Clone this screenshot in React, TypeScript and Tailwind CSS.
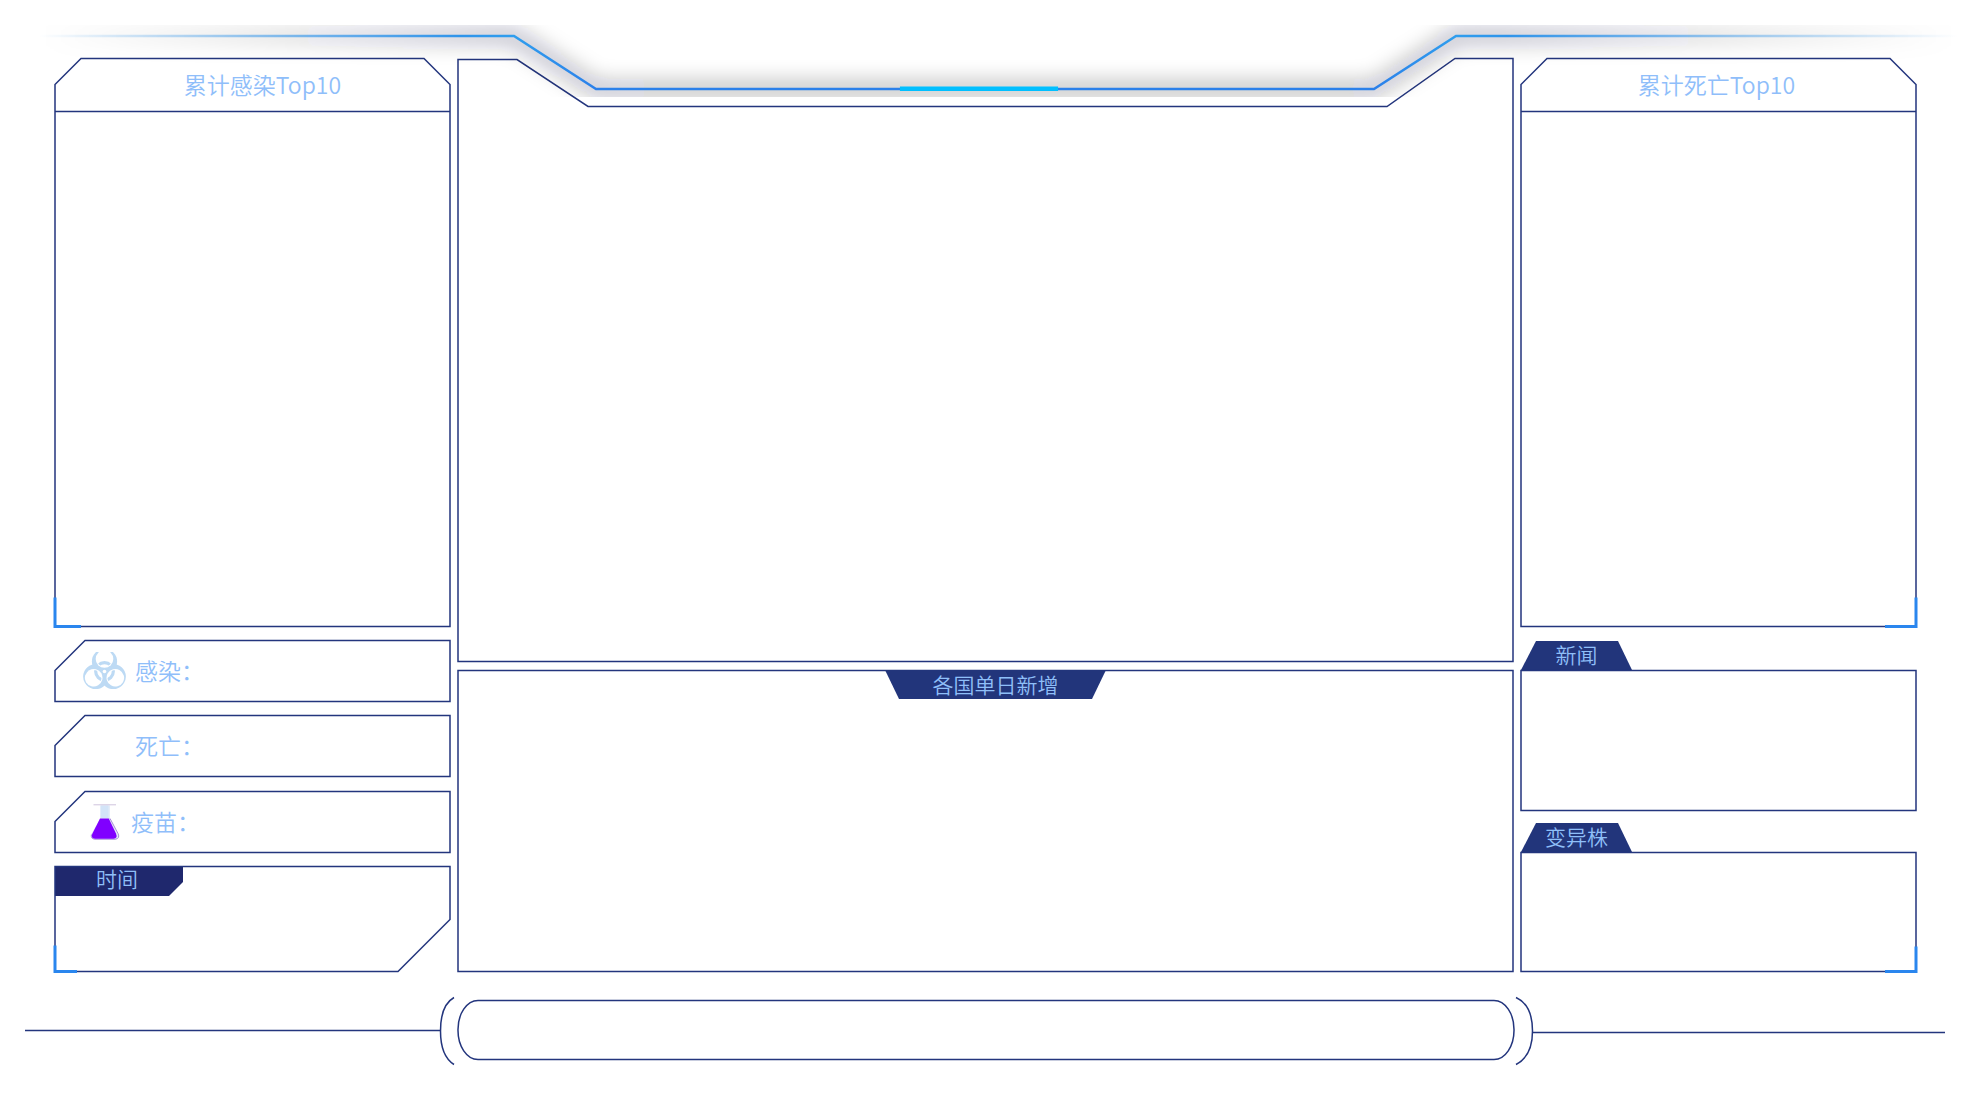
import { useLayoutEffect, useRef, useState } from "react";
import type { ReactNode, RefObject } from "react";

const NAVY = "#23357d";
const ACCENT = "#2a86ee";

function useSize<T extends Element>(): [RefObject<T | null>, number, number] {
  const ref = useRef<T>(null);
  const [size, setSize] = useState({ w: 0, h: 0 });
  useLayoutEffect(() => {
    const el = ref.current;
    if (!el) return;
    const read = () => {
      const r = el.getBoundingClientRect();
      setSize({ w: Math.round(r.width), h: Math.round(r.height) });
    };
    read();
    const observer = new ResizeObserver(read);
    observer.observe(el);
    return () => observer.disconnect();
  }, []);
  return [ref, size.w, size.h];
}

type Draw = (w: number, h: number) => string;

/* Outline that follows the size of the panel around it. */
function Outline({ draw, accent }: { draw: Draw; accent?: Draw }) {
  const [ref, w, h] = useSize<SVGSVGElement>();
  return (
    <svg ref={ref} aria-hidden="true" className="pointer-events-none absolute inset-0 size-full overflow-visible">
      <g transform="translate(0 0.5)" fill="none">
        <path d={draw(w, h)} stroke={NAVY} strokeWidth="1.5" />
        {accent && <path d={accent(w, h)} stroke={ACCENT} strokeWidth="3" />}
      </g>
    </svg>
  );
}

const box: Draw = (w, h) => `M0 0H${w}V${h}H0Z`;
const topPanel: Draw = (w, h) => `M0 26L26 0H${w - 26}L${w} 26V${h}H0ZM0 53H${w}`;
const statBox: Draw = (w, h) => `M0 30L30 0H${w}V${h}H0Z`;
const timeBox: Draw = (w, h) => `M0 0H${w}V${h - 52}L${w - 52} ${h}H0Z`;
const mapBox: Draw = (w, h) =>
  `M0 ${h}V1H59L130 48H${w - 126}L${w - 58} 0H${w}V${h}Z`;
const pill: Draw = (w, h) =>
  `M20 0H${w - 20}A20 29 0 0 1 ${w} ${h / 2}A20 29 0 0 1 ${w - 20} ${h}H20A20 29 0 0 1 0 ${h / 2}A20 29 0 0 1 20 0Z`;

function HeaderLine() {
  const [ref, w] = useSize<SVGSVGElement>();
  const a = Math.round(w * 0.2591);
  const b = Math.round(w * 0.3004);
  const c = Math.round(w * 0.6925);
  const d = Math.round(w * 0.7339);
  const end = w - 26;
  const line = `M39 11H${a}L${b} 64H${c}L${d} 11H${end}`;
  return (
    <header className="pointer-events-none absolute inset-x-0 top-[25px] z-10 h-[72px] overflow-hidden">
      <svg ref={ref} aria-hidden="true" className="size-full">
        <defs>
          <linearGradient id="beam" gradientUnits="userSpaceOnUse" x1="39" y1="0" x2={end} y2="0">
            <stop offset="0" stopColor="#3f9bea" stopOpacity="0" />
            <stop offset="0.12" stopColor="#3f9bea" stopOpacity="0.6" />
            <stop offset="0.22" stopColor="#2f94ea" />
            <stop offset="0.247" stopColor="#2f9eee" />
            <stop offset="0.29" stopColor="#2b80ea" />
            <stop offset="0.696" stopColor="#2b80ea" />
            <stop offset="0.738" stopColor="#2f9eee" />
            <stop offset="0.765" stopColor="#2f94ea" />
            <stop offset="0.87" stopColor="#3f9bea" stopOpacity="0.55" />
            <stop offset="1" stopColor="#3f9bea" stopOpacity="0" />
          </linearGradient>
          <linearGradient id="shade" gradientUnits="userSpaceOnUse" x1="39" y1="0" x2={end} y2="0">
            <stop offset="0" stopColor="#061030" stopOpacity="0" />
            <stop offset="0.1" stopColor="#061030" stopOpacity="0.22" />
            <stop offset="0.24" stopColor="#061030" stopOpacity="0.6" />
            <stop offset="0.5" stopColor="#000000" stopOpacity="0.6" />
            <stop offset="0.76" stopColor="#061030" stopOpacity="0.6" />
            <stop offset="0.9" stopColor="#061030" stopOpacity="0.22" />
            <stop offset="1" stopColor="#061030" stopOpacity="0" />
          </linearGradient>
          <filter id="glow" filterUnits="userSpaceOnUse" x="0" y="-60" width={w} height="200">
            <feGaussianBlur stdDeviation="11" />
          </filter>
        </defs>
        <path d={line} fill="none" stroke="url(#shade)" strokeWidth="7" filter="url(#glow)" />
        <path d={line} fill="none" stroke="url(#beam)" strokeWidth="2.5" />
        <rect x={w * 0.4536} y="61.5" width={w * 0.0797} height="4.5" fill="#00bfff" />
      </svg>
    </header>
  );
}

function Biohazard() {
  const angles = [0, 120, 240];
  return (
    <svg viewBox="0 0 43 37" aria-hidden="true" className="h-[37px] w-[43px]">
      <defs>
        <mask id="bio-lobes" maskUnits="userSpaceOnUse" x="0" y="0" width="43" height="37">
          <rect width="43" height="37" fill="#fff" />
          {angles.map((t) => (
            <circle key={t} cx="21.5" cy="7" r="8.8" fill="#000" transform={`rotate(${t} 21.5 19.5)`} />
          ))}
          <circle cx="21.5" cy="19.5" r="1.8" fill="#000" />
        </mask>
        <clipPath id="bio-ring">
          {angles.map((t) => (
            <circle key={t} cx="21.5" cy="7" r="7.8" transform={`rotate(${t} 21.5 19.5)`} />
          ))}
        </clipPath>
      </defs>
      <g fill="#bddaf4" mask="url(#bio-lobes)">
        {angles.map((t) => (
          <circle key={t} cx="21.5" cy="9.4" r="12.6" transform={`rotate(${t} 21.5 19.5)`} />
        ))}
      </g>
      <circle cx="21.5" cy="19.5" r="8.8" fill="none" stroke="#bddaf4" strokeWidth="3.2" clipPath="url(#bio-ring)" />
    </svg>
  );
}

function Flask() {
  return (
    <svg viewBox="0 0 30 36" aria-hidden="true" className="h-9 w-[30px]">
      <path d="M10.5 1.5H20V14L28 29.5Q30.5 35 25.5 35.5H4.5Q0 35 1 30.5L10.5 14Z" fill="#e4ecf8" />
      <path d="M10.5 1.5H18.5V14H10.5Z" fill="#d3e4f8" />
      <path d="M3.5 0.8H26" stroke="#cfc4dd" strokeWidth="1" />
      <path d="M20 14.5L28.2 29.8Q30 34.5 25.5 35.2H5Q0.6 34.8 1.4 30.5" fill="none" stroke="#a98fd6" strokeWidth="1" />
      <path d="M10 14.5H18.8L26 29.5Q28 34.5 23.5 34.8H5Q0.8 34.4 2.2 30Z" fill="#8000ff" />
    </svg>
  );
}

function TopPanel({ title, flip }: { title: string; flip?: boolean }) {
  return (
    <section className="relative h-[568px]">
      <Outline
        draw={topPanel}
        accent={
          flip
            ? (w, h) => `M${w} ${h - 29}V${h}H${w - 31}`
            : (_, h) => `M0 ${h - 29}V${h}H26`
        }
      />
      <h2
        className={
          flip
            ? "flex h-[53px] items-center justify-center pr-1 text-[23px]"
            : "flex h-[53px] items-center justify-center pl-5 text-[23px]"
        }
      >
        {title}
      </h2>
    </section>
  );
}

function Stat({ children }: { children: ReactNode }) {
  return (
    <section className="relative flex h-[61px] items-center pl-7 text-[23px]">
      <Outline draw={statBox} />
      {children}
    </section>
  );
}

function TabbedPanel({ title, className, accent }: { title: string; className: string; accent?: Draw }) {
  return (
    <section className={className}>
      <h2 className="flex h-[29px] w-[111px] items-center justify-center bg-[#22357b] pb-0.5 text-[21px] text-[#8fbff8] [clip-path:polygon(15px_0,calc(100%-14px)_0,100%_100%,0_100%)]">
        {title}
      </h2>
      <div className="relative flex-1">
        <Outline draw={box} accent={accent} />
      </div>
    </section>
  );
}

export default function App() {
  return (
    <div className="relative min-h-screen w-full overflow-hidden bg-white pt-[58px] pb-12 font-['Noto_Sans_CJK_SC',sans-serif] font-[350] text-[#8fbefa]">
      <HeaderLine />
      <main className="grid min-h-[913px] grid-cols-[395fr_1055fr_395fr] gap-2 pr-[68px] pl-[55px]">
        <div className="flex flex-col gap-[14px]">
          <TopPanel title="累计感染Top10" />
          <Stat>
            <Biohazard />
            <span className="pl-[9px]">感染：</span>
          </Stat>
          <Stat>
            <span className="pl-[52px]">死亡：</span>
          </Stat>
          <div className="pt-px">
            <Stat>
              <div className="pl-[7px]">
                <Flask />
              </div>
              <span className="pl-[11px]">疫苗：</span>
            </Stat>
          </div>
          <section className="relative flex-1">
            <h2 className="flex h-[30px] w-32 items-center justify-center bg-[#1f286d] pr-1 pb-1 text-[21px] text-[#8fbff8] [clip-path:polygon(0_0,100%_0,100%_16px,calc(100%-14px)_100%,0_100%)]">
              时间
            </h2>
            <Outline draw={timeBox} accent={(_, h) => `M0 ${h - 26}V${h}H22`} />
          </section>
        </div>

        <div className="flex flex-col gap-[9px]">
          <section className="relative h-[603px]">
            <Outline draw={mapBox} />
          </section>
          <section className="relative flex-1">
            <Outline draw={box} />
            <div className="flex justify-center pl-5">
              <h2 className="flex h-[29px] w-[221px] items-center justify-center bg-[#22357b] text-[21px] text-[#8fbff8] [clip-path:polygon(0_0,100%_0,calc(100%-14px)_100%,14px_100%)]">
                各国单日新增
              </h2>
            </div>
          </section>
        </div>

        <div className="flex flex-col">
          <TopPanel title="累计死亡Top10" flip />
          <TabbedPanel title="新闻" className="mt-[15px] flex h-[169px] flex-col" />
          <TabbedPanel
            title="变异株"
            className="mt-[13px] flex flex-1 flex-col"
            accent={(w, h) => `M${w} ${h - 25}V${h}H${w - 31}`}
          />
        </div>
      </main>

      <footer className="mt-[25px] flex h-[68px] items-center pr-[39px] pl-[25px]">
        <div className="relative h-0.5 flex-[415]">
          <Outline draw={(w) => `M0 1H${w}`} />
        </div>
        <svg viewBox="0 0 14 68" aria-hidden="true" className="h-[68px] w-[14px] overflow-visible">
          <path d="M14 1.5Q0.5 9 0.5 35Q0.5 60 14 68.5" fill="none" stroke={NAVY} strokeWidth="1.5" />
        </svg>
        <div className="relative mr-[2px] mb-0.5 ml-1 h-[59px] flex-[1056]">
          <Outline draw={pill} />
        </div>
        <svg viewBox="0 0 17 68" aria-hidden="true" className="h-[68px] w-[17px] overflow-visible">
          <path d="M0 1.5Q16.5 9 16.5 35Q16.5 60 0 68.5" fill="none" stroke={NAVY} strokeWidth="1.5" />
        </svg>
        <div className="relative h-0.5 flex-[412]">
          <Outline draw={(w) => `M0 3H${w}`} />
        </div>
      </footer>
    </div>
  );
}
